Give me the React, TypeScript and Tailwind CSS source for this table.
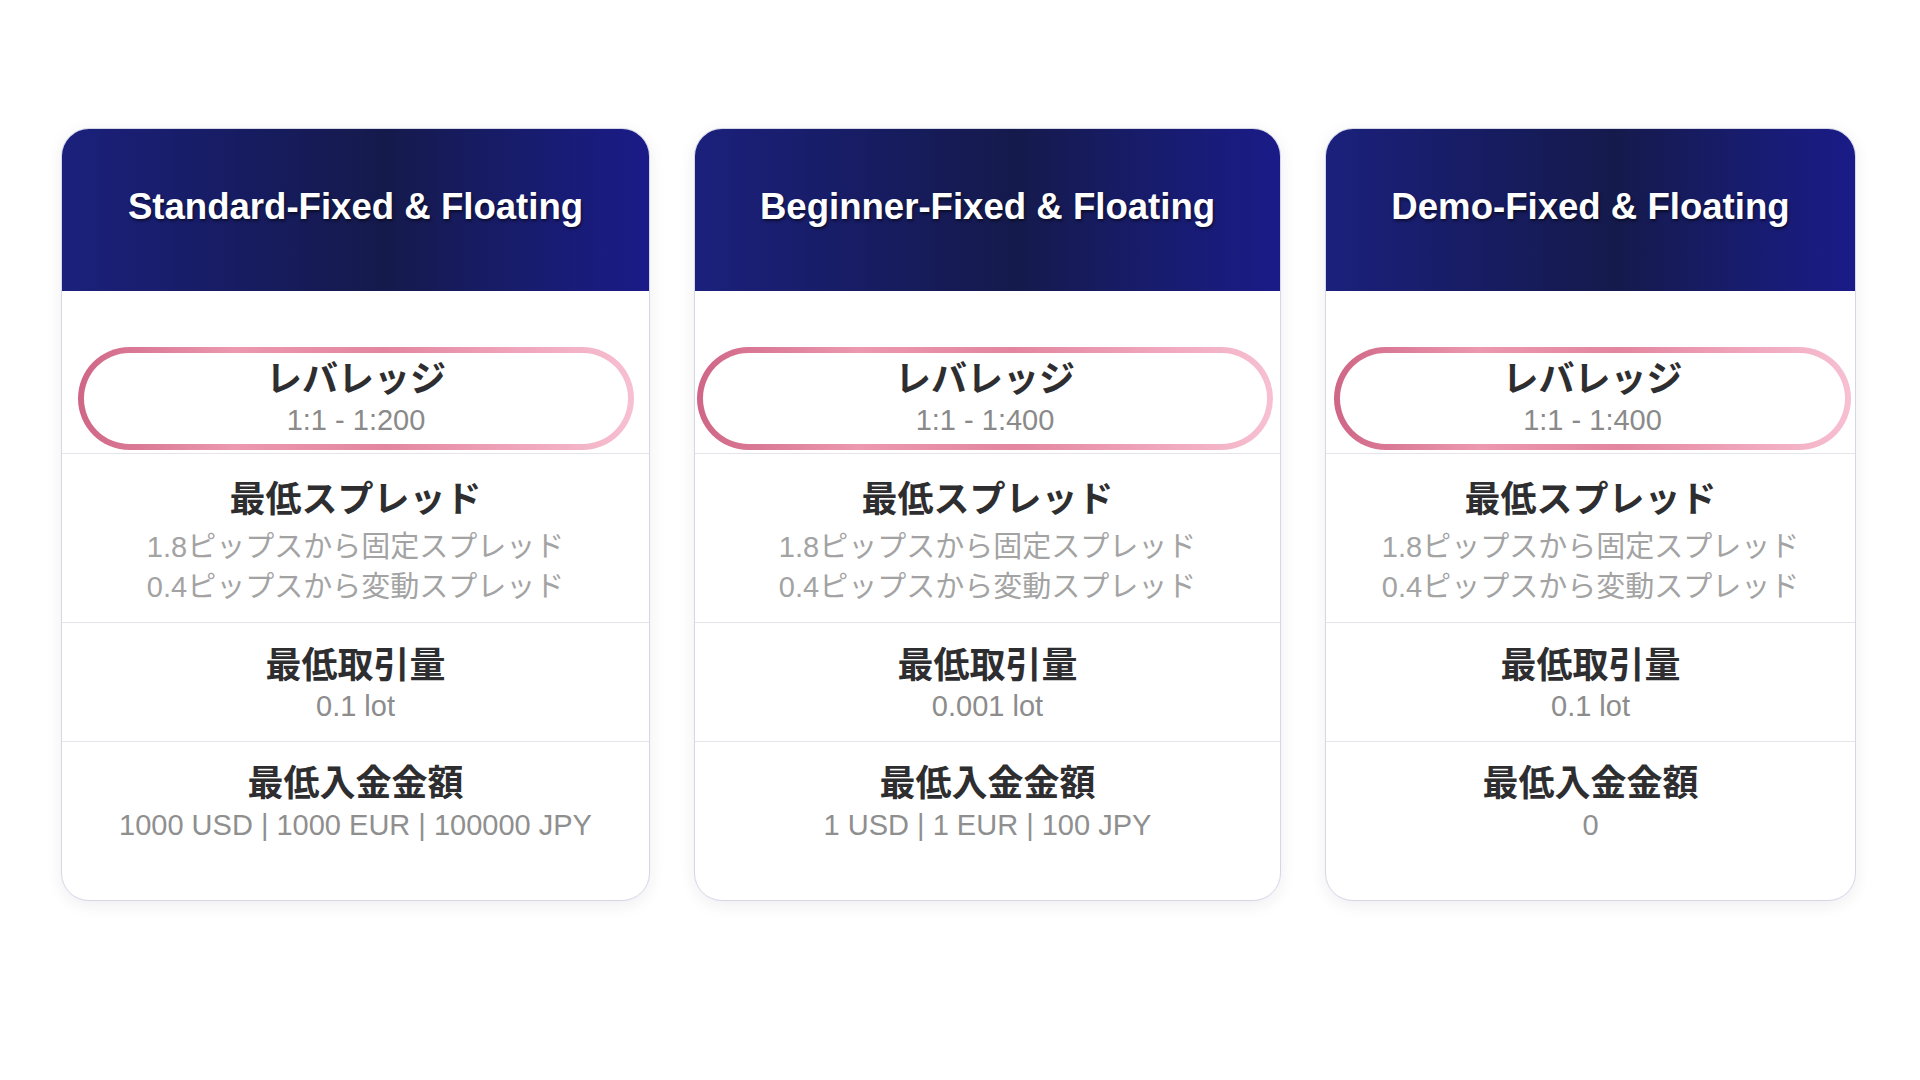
const font = { fontFamily: '"Liberation Sans", Arial, "Noto Sans CJK JP", sans-serif' }

interface Plan {
  name: string
  leverage: string
  lot: string
  deposit: string
  width: string
  pill: string
}

const plans: Plan[] = [
  {
    name: 'Standard-Fixed & Floating',
    leverage: '1:1 - 1:200',
    lot: '0.1 lot',
    deposit: '1000 USD | 1000 EUR | 100000 JPY',
    width: 'w-[589px]',
    pill: 'ml-[16px] mr-[15px]',
  },
  {
    name: 'Beginner-Fixed & Floating',
    leverage: '1:1 - 1:400',
    lot: '0.001 lot',
    deposit: '1 USD | 1 EUR | 100 JPY',
    width: 'w-[587px]',
    pill: 'ml-[2px] mr-[7px]',
  },
  {
    name: 'Demo-Fixed & Floating',
    leverage: '1:1 - 1:400',
    lot: '0.1 lot',
    deposit: '0',
    width: 'w-[531px]',
    pill: 'ml-[8px] mr-[4px]',
  },
]

const Titulo = ({ children }: { children: string }) => (
  <div className="text-[36px] leading-[40px] font-bold text-[#2e2e30]">{children}</div>
)

const Card = ({ plan }: { plan: Plan }) => {
  return (
    <div
      className={`${plan.width} shrink-0 flex flex-col rounded-[28px] border border-[#d5d7e7] bg-white overflow-hidden shadow-[0_4px_16px_rgba(40,40,80,0.08)]`}
    >
      <div className="h-[162px] pt-[57px] text-center bg-[linear-gradient(90deg,#1b207c_0%,#171c62_30%,#151a4c_55%,#181c6c_78%,#1a1b88_100%)]">
        <h2 className="text-[36.6px] leading-[41px] font-bold text-white [text-shadow:1px_2px_3px_rgba(0,0,0,0.55)]">
          {plan.name}
        </h2>
      </div>

      <div className="pt-[56px] pb-[3px] border-b border-[#e4e4ea]">
        <div
          className={`${plan.pill} h-[103px] rounded-full p-[6px] bg-[linear-gradient(90deg,#cf6686_0%,#ec98af_28%,#e3859f_55%,#f0a6bc_80%,#f7c0d2_100%)]`}
        >
          <div className="h-full rounded-full bg-white flex flex-col items-center justify-center pt-[3px]">
            <div className="text-[36px] leading-[39px] font-bold text-[#2e2e30]">レバレッジ</div>
            <div className="mt-[2px] text-[29px] leading-[39px] text-[#8a8a8a]">{plan.leverage}</div>
          </div>
        </div>
      </div>

      <div className="pt-[26px] pb-[15px] border-b border-[#e4e4ea] flex flex-col items-center">
        <Titulo>最低スプレッド</Titulo>
        <div className="mt-[7px] text-[29px] leading-[40px] text-[#a3a3a3]">1.8ピップスから固定スプレッド</div>
        <div className="text-[29px] leading-[40px] text-[#a3a3a3]">0.4ピップスから変動スプレッド</div>
      </div>

      <div className="pt-[23px] pb-[15px] border-b border-[#e4e4ea] flex flex-col items-center">
        <Titulo>最低取引量</Titulo>
        <div className="text-[29px] leading-[40px] text-[#8c8c8c]">{plan.lot}</div>
      </div>

      <div className="pt-[22px] pb-[55px] flex flex-col items-center">
        <Titulo>最低入金金額</Titulo>
        <div className="mt-[1px] text-[29px] leading-[40px] text-[#8f8f8f]">{plan.deposit}</div>
      </div>
    </div>
  )
}

const App = () => {
  return (
    <div className="min-h-screen bg-white" style={font}>
      <section className="flex gap-[44px] pl-[61px] pt-[128px]">
        {plans.map((p) => (
          <Card key={p.name} plan={p} />
        ))}
      </section>
    </div>
  )
}

export default App
